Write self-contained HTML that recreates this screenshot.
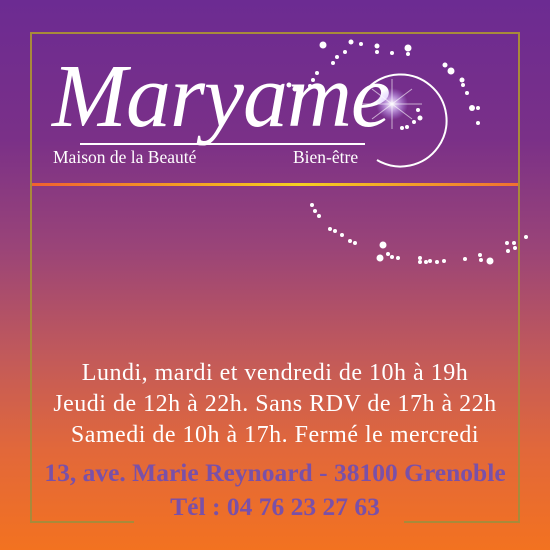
<!DOCTYPE html>
<html><head><meta charset="utf-8"><style>
html,body{margin:0;padding:0}
body{width:550px;height:550px;position:relative;overflow:hidden;font-family:"Liberation Serif",serif;
background:linear-gradient(180deg,#6c2b92 0%,#7a3088 25%,#9a4478 45%,#c25a5a 65%,#e2683a 82%,#f37220 100%);}
.b{position:absolute;background:#a88a3a}
.t{position:absolute;left:0;width:550px;text-align:center;color:#fff;font-size:24px;letter-spacing:0.5px;line-height:28px;white-space:nowrap}
.a{position:absolute;left:0;width:550px;text-align:center;color:#7a50a8;font-weight:bold;font-size:25.5px;white-space:nowrap}
</style></head><body>
<div class="b" style="left:30px;top:32px;width:490px;height:2px"></div>
<div class="b" style="left:30px;top:32px;width:2px;height:491px"></div>
<div class="b" style="left:518px;top:32px;width:2px;height:491px"></div>
<div class="b" style="left:30px;top:521px;width:104px;height:2px"></div>
<div class="b" style="left:404px;top:521px;width:116px;height:2px"></div>
<div style="position:absolute;left:32px;top:183px;width:486px;height:3px;background:linear-gradient(90deg,#f06030,#f5b020 40%,#f5d020 55%,#f07030)"></div>
<div style="position:absolute;left:52px;top:52px;font-style:italic;font-size:90px;color:#fff;letter-spacing:-1px;line-height:90px;white-space:nowrap">Maryame</div>
<div style="position:absolute;left:80px;top:143px;width:285px;height:2px;background:#fff"></div>
<div style="position:absolute;left:53px;top:147px;color:#fff;font-size:17.5px;white-space:nowrap">Maison de la Beauté</div>
<div style="position:absolute;left:293px;top:147px;color:#fff;font-size:17.5px;white-space:nowrap">Bien-être</div>
<svg style="position:absolute;left:0;top:0" width="550" height="550">
<defs><radialGradient id="g"><stop offset="0" stop-color="#fff"/><stop offset="0.4" stop-color="#e0c8ff" stop-opacity=".7"/><stop offset="1" stop-color="#c0a0ff" stop-opacity="0"/></radialGradient></defs>
<path d="M368 88 A46 46 0 1 1 377 160" fill="none" stroke="#fff" stroke-width="2"/>
<circle cx="392" cy="104" r="16" fill="url(#g)"/>
<path d="M362 104 L422 104 M392 79 L392 129 M372 89 L412 119 M412 89 L372 119" stroke="#fff" stroke-width="1" opacity=".6"/>
<g fill="#fff">
<circle cx="323" cy="45" r="3.5"/><circle cx="351" cy="42" r="2.5"/><circle cx="361" cy="44" r="2"/><circle cx="377" cy="46" r="2.5"/><circle cx="377" cy="52" r="2"/><circle cx="392" cy="53" r="2"/><circle cx="408" cy="48" r="3.5"/><circle cx="408" cy="54" r="2"/><circle cx="345" cy="52" r="2"/><circle cx="337" cy="57" r="2"/><circle cx="333" cy="63" r="2"/><circle cx="317" cy="73" r="2"/><circle cx="313" cy="80" r="2"/><circle cx="310" cy="86" r="2"/><circle cx="289" cy="85" r="2.5"/><circle cx="295" cy="89" r="2.5"/>
<circle cx="445" cy="65" r="2.5"/><circle cx="451" cy="71" r="3.5"/><circle cx="462" cy="80" r="2.5"/><circle cx="463" cy="85" r="2"/><circle cx="467" cy="93" r="2"/><circle cx="472" cy="108" r="3"/><circle cx="478" cy="108" r="2"/><circle cx="478" cy="123" r="2"/>
<circle cx="418" cy="110" r="2"/><circle cx="420" cy="118" r="2.5"/><circle cx="414" cy="122" r="2"/><circle cx="407" cy="127" r="2"/><circle cx="402" cy="128" r="2"/>
<circle cx="312" cy="205" r="2"/><circle cx="315" cy="211" r="2"/><circle cx="319" cy="216" r="2"/><circle cx="330" cy="229" r="2"/><circle cx="335" cy="231" r="2"/><circle cx="342" cy="235" r="2"/><circle cx="350" cy="241" r="2"/><circle cx="355" cy="243" r="2"/>
<circle cx="383" cy="245" r="3.5"/><circle cx="380" cy="258" r="3.5"/><circle cx="388" cy="254" r="2"/><circle cx="392" cy="257" r="2"/><circle cx="398" cy="258" r="2"/>
<circle cx="420" cy="258" r="2"/><circle cx="420" cy="262" r="2"/><circle cx="426" cy="262" r="2"/><circle cx="430" cy="261" r="2"/><circle cx="437" cy="262" r="2"/><circle cx="444" cy="261" r="2"/><circle cx="465" cy="259" r="2"/><circle cx="480" cy="255" r="2"/><circle cx="481" cy="260" r="2"/><circle cx="490" cy="261" r="3.5"/>
<circle cx="507" cy="243" r="2"/><circle cx="508" cy="251" r="2"/><circle cx="514" cy="243" r="2"/><circle cx="515" cy="248" r="2"/><circle cx="526" cy="237" r="2"/>
</g></svg>
<div class="t" style="top:359px">Lundi, mardi et vendredi de 10h à 19h</div>
<div class="t" style="top:390px">Jeudi de 12h à 22h. Sans RDV de 17h à 22h</div>
<div class="t" style="top:421px">Samedi de 10h à 17h. Fermé le mercredi</div>
<div class="a" style="top:458px">13, ave. Marie Reynoard - 38100 Grenoble</div>
<div class="a" style="top:492px">Tél : 04 76 23 27 63</div>
</body></html>
